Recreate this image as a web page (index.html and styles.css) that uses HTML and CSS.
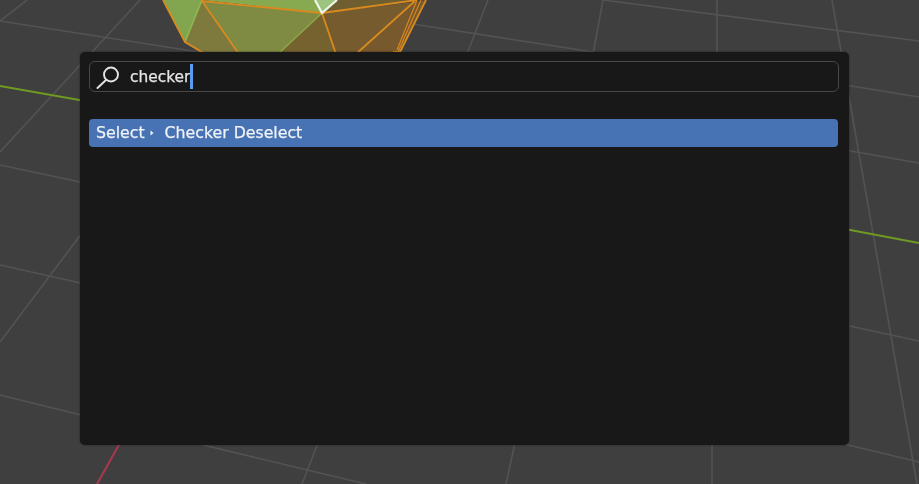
FILE: index.html
```html
<!DOCTYPE html>
<html lang="en">
<head>
<meta charset="utf-8">
<title>Search</title>
<link rel="stylesheet" href="styles.css">
</head>
<body>
<main class="viewport">
  <svg class="scene" width="919" height="484" viewBox="0 0 919 484" aria-hidden="true">
    <g class="grid">
      <path d="M0 21L205 53"/>
      <path d="M27 0L-5 25"/>
      <path d="M0 152L140 0"/>
      <path d="M0 165L85 183"/>
      <path d="M0 342L85 229"/>
      <path d="M0 265L85 284"/>
      <path d="M0 395L85 416"/>
      <path d="M400 22L593 52"/>
      <path d="M488 0L467 54"/>
      <path d="M603 0L593 54"/>
      <path d="M717 0V54"/>
      <path d="M603 0L919 41"/>
      <path d="M832 0L917 484"/>
      <path d="M845 85L919 97"/>
      <path d="M845 150L919 163"/>
      <path d="M845 325L919 341"/>
      <path d="M840 443L919 462"/>
      <path d="M203 445L366 484"/>
      <path d="M318 443L302 484"/>
      <path d="M515 443L506 484"/>
      <path d="M712 443V484"/>
    </g>
    <path class="axis-x" d="M120 443L97 484"/>
    <path class="axis-y" d="M0 86L85 101M845 229L919 243"/>
    <g class="mesh">
      <polygon class="f-green" points="163,0 202,0 185,42"/>
      <polygon class="f-green2" points="202,0 315,0 322,13"/>
      <polygon class="f-olive" points="202,1 185,42 205,54 239,54"/>
      <polygon class="f-olive2" points="202,1 322,13 278,54 239,54"/>
      <polygon class="f-brown" points="322,13 278,54 336,54"/>
      <polygon class="f-brown2" points="322,13 336,54 356,54 415,2"/>
      <polygon class="f-brown3" points="337,0 322,13 417,0"/>
      <polygon class="f-brown4" points="415,2 356,54 400,54 426,0"/>
      <polygon class="f-white" points="315,0 337,0 322,13"/>
      <path class="e-green" d="M202 0L185 42"/>
      <path class="e-soft" d="M322 13L278 54"/>
      <path class="e-orange" d="M163 0L185 42L205 54M202 1L322 13L417 0M202 1L239 54M322 13L336 54M415 1L356 54M426 0L400 52H393"/>
      <path class="e-orange-thin" d="M417 0L397 50M421 0L398 52"/>
      <path class="e-white" d="M315 0L322 13L337 0"/>
    </g>
  </svg>

  <section class="panel">
    <div class="search-box">
      <svg class="search-icon" width="24" height="24" viewBox="0 0 24 24" aria-hidden="true">
        <circle cx="15" cy="9.5" r="7"/>
        <path d="M10 15L1.5 23"/>
      </svg>
      <span class="query">checker</span><span class="caret"></span>
    </div>
    <div class="result">
      <span class="crumb">Select</span>
      <svg class="chevron" width="4" height="6" viewBox="0 0 4 6" aria-hidden="true"><path d="M0.5 0.5L3.5 3L0.5 5.5Z"/></svg>
      <span class="item">Checker Deselect</span>
    </div>
  </section>
</main>
</body>
</html>
```

FILE: styles.css
```css
html, body {
  margin: 0;
  height: 100%;
  overflow: hidden;
  background: #3f3f3f;
}

.viewport {
  position: relative;
  width: 919px;
  height: 484px;
  box-sizing: border-box;
  padding: 52px 0 0 80px;
  background: #3f3f3f;
  font-family: "DejaVu Sans", sans-serif;
  filter: blur(0.6px);
  overflow: hidden;
}

.scene {
  position: absolute;
  left: 0;
  top: 0;
}

.grid path {
  fill: none;
  stroke: #535353;
  stroke-width: 1.6;
}

.axis-x { fill: none; stroke: #a23a4c; stroke-width: 2.2; }
.axis-y { fill: none; stroke: #6f9a22; stroke-width: 2.2; }

.f-green { fill: #82a650; }
.f-green2 { fill: #87a950; }
.f-olive { fill: #7e7a3e; }
.f-olive2 { fill: #7f8a42; }
.f-brown { fill: #75622f; }
.f-brown2 { fill: #755b2e; }
.f-brown3 { fill: #6f5f30; }
.f-brown4 { fill: #78582d; }
.f-white { fill: #9cc47e; }

.mesh path { fill: none; }
.e-green { stroke: #8fb84f; stroke-width: 1.6; }
.e-soft { stroke: #8aa845; stroke-width: 1.6; }
.e-orange { stroke: #d98a1e; stroke-width: 1.8; }
.e-orange-thin { stroke: #d98a1e; stroke-width: 1.1; }
.e-white { stroke: #f0f5ea; stroke-width: 2.2; }

.panel {
  position: relative;
  box-sizing: border-box;
  width: 769px;
  height: 393px;
  padding: 9px 10px 0 9px;
  background: #181818;
  border-radius: 5px;
  box-shadow: 0 0 2px rgba(20, 20, 20, 0.7);
}

.search-box {
  display: flex;
  align-items: center;
  box-sizing: border-box;
  height: 31px;
  padding-left: 6px;
  margin-bottom: 27px;
  background: #181818;
  border: 1.5px solid #484848;
  border-radius: 6px;
}

.search-icon {
  flex: none;
  margin-right: 10px;
  fill: none;
  stroke: #e4e4e4;
  stroke-width: 1.9;
  stroke-linecap: round;
}

.query {
  color: #e6e6e6;
  font-size: 15.4px;
  line-height: 26px;
  -webkit-text-stroke: 0.25px #e6e6e6;
}

.caret {
  width: 3px;
  height: 25px;
  background: #5a9af0;
}

.result {
  display: flex;
  align-items: center;
  box-sizing: border-box;
  height: 28px;
  margin-right: 1px;
  padding: 0 0 1px 7px;
  background: #4772b3;
  border-radius: 4px;
  color: #f0f3f8;
  font-size: 15.75px;
  -webkit-text-stroke: 0.25px #f0f3f8;
}

.chevron {
  flex: none;
  margin: 0 11px 0 5px;
  fill: #f0f3f8;
}
```
